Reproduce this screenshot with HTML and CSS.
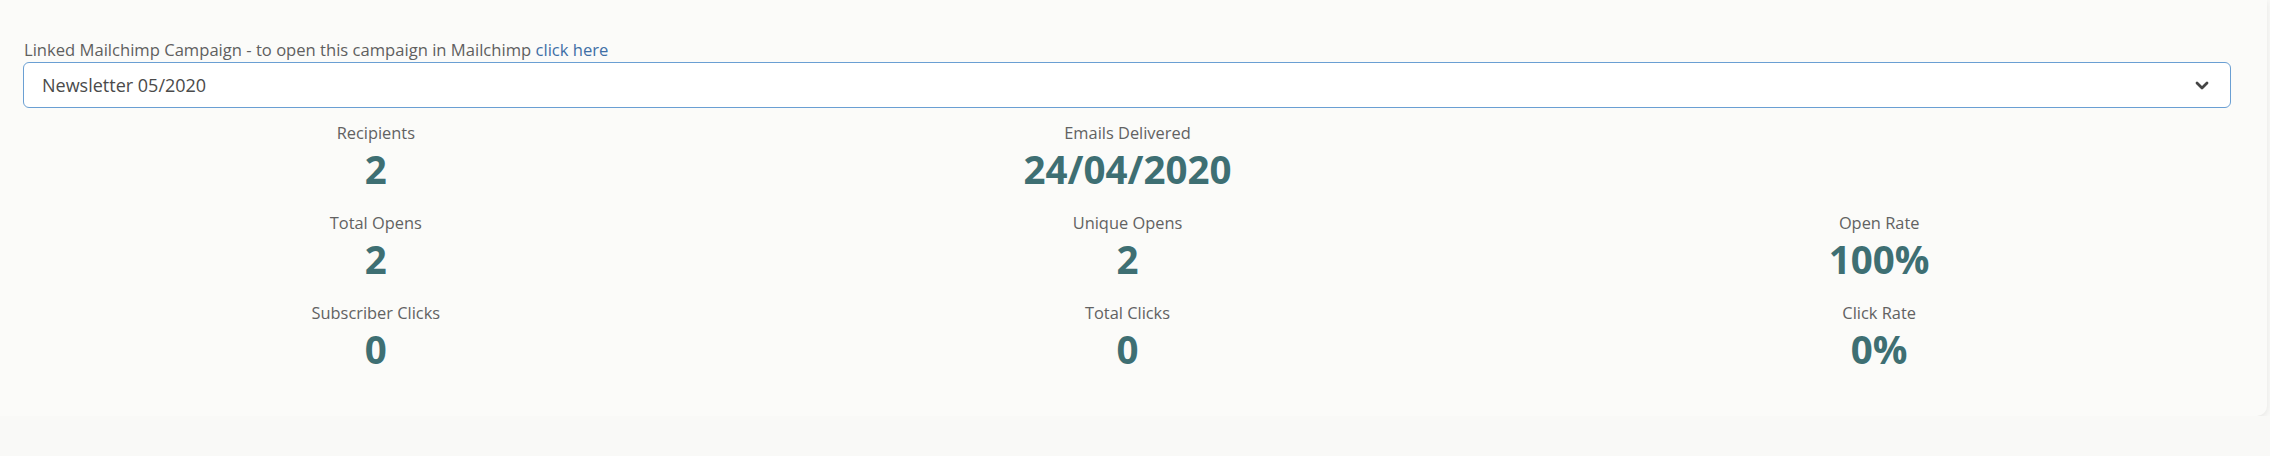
FILE: index.html
```html
<!DOCTYPE html>
<html lang="en">

<head>
    <meta charset="UTF-8">
    <title>Mailchimp Campaign</title>
    <link rel="stylesheet" href="styles.css">
</head>

<body>
    <div class="card">
        <div class="field">
            <label class="field-label">Linked Mailchimp Campaign - to open this campaign in Mailchimp <a href="#" class="link">click here</a></label>
            <div class="select">
                <span class="select-value">Newsletter 05/2020</span>
                <svg class="chevron" width="14" height="9" viewBox="0 0 14 9">
                    <polyline points="2,2 7,7 12,2" fill="none" stroke="#454545" stroke-width="2.8" stroke-linecap="round" stroke-linejoin="round" />
                </svg>
            </div>
        </div>
        <div class="stats">
            <div class="stat">
                <div class="stat-label">Recipients</div>
                <div class="stat-value">2</div>
            </div>
            <div class="stat">
                <div class="stat-label">Emails Delivered</div>
                <div class="stat-value">24/04/2020</div>
            </div>
            <div class="stat"></div>
            <div class="stat">
                <div class="stat-label">Total Opens</div>
                <div class="stat-value">2</div>
            </div>
            <div class="stat">
                <div class="stat-label">Unique Opens</div>
                <div class="stat-value">2</div>
            </div>
            <div class="stat">
                <div class="stat-label">Open Rate</div>
                <div class="stat-value">100%</div>
            </div>
            <div class="stat">
                <div class="stat-label">Subscriber Clicks</div>
                <div class="stat-value">0</div>
            </div>
            <div class="stat">
                <div class="stat-label">Total Clicks</div>
                <div class="stat-value">0</div>
            </div>
            <div class="stat">
                <div class="stat-label">Click Rate</div>
                <div class="stat-value">0%</div>
            </div>
        </div>
    </div>
</body>

</html>
```

FILE: styles.css
```css
body {
    margin: 0;
    background-color: #f9f9f7; /* page behind the card */
    font-family: "Open Sans", "Noto Sans", sans-serif;
    color: #5f5f5f;
}

.card {
    background-color: #fbfbf9;
    margin-right: 3px;
    border-radius: 0 0 10px 0;
    box-shadow: 0 2px 6px rgba(0, 0, 0, 0.08);
    padding: 38px 12px 25px 0;
}

.field {
    padding: 0 24px 0 23px;
}

.field-label {
    display: block;
    font-size: 16.6px;
    line-height: 24px;
    padding-left: 1px;
}

.link {
    color: #3f6fa6;
    text-decoration: none;
}

.select {
    display: flex;
    align-items: center;
    justify-content: space-between;
    height: 44px;
    background-color: #ffffff;
    border: 1px solid #6a9fd3;
    border-radius: 6px;
    padding: 0 21px 0 18px;
}

.select-value {
    font-size: 18px;
    color: #4a4a4a;
}

.stats {
    margin-top: 13px;
    display: grid;
    grid-template-columns: repeat(3, 1fr);
}

.stat {
    text-align: center;
    margin-bottom: 18px;
}

.stat-label {
    font-size: 16.4px;
    line-height: 24px;
    color: #626262;
}

.stat-value {
    font-size: 38.5px;
    line-height: 48px;
    font-weight: 700;
    color: #3e6f73;
}
```
